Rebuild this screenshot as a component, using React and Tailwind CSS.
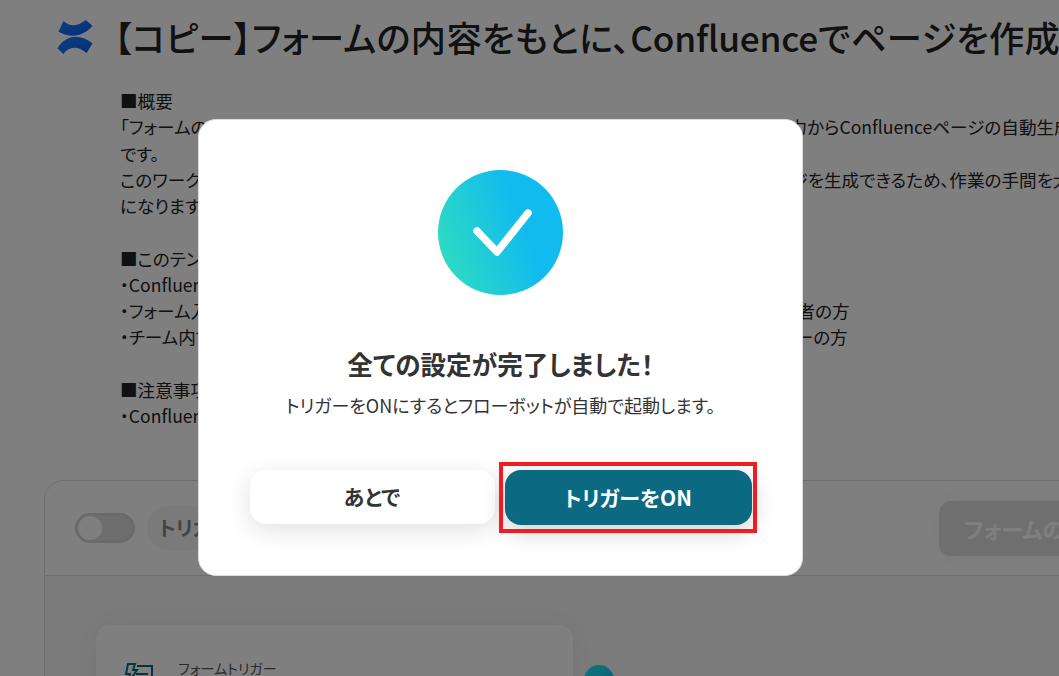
const bodyLines = [
  '■概要',
  '「フォームの内容をもとに、Confluenceでページを作成する」ワークフローは、フォームの入力からConfluenceページの自動生成を実現する業務効率化フロー',
  'です。',
  'このワークフローを活用すると、フォームからの送信内容をもとに、自動でConfluenceページを生成できるため、作業の手間を大幅に削減できるよう',
  'になります。',
  '',
  '■このテンプレートをおすすめする方',
  '・Confluenceを日常的に活用してドキュメントを管理しているチームの方',
  '・フォーム入力の内容をもとにしたページ作成を毎回手作業で行っていて負担に感じる担当者の方',
  '・チーム内での情報共有やナレッジ管理を、よりスムーズに進めたいと考えているマネージャーの方',
  '',
  '■注意事項',
  '・Confluenceとのアカウント連携が必要です。',
];

function ConfluenceLogo() {
  return (
    <svg width="38" height="35" viewBox="0 0 38 36" className="mt-[1px] shrink-0">
      <defs>
        <linearGradient id="conf" x1="0" y1="0" x2="1" y2="1">
          <stop offset="0" stopColor="#1a7eff" />
          <stop offset="1" stopColor="#0c5ff0" />
        </linearGradient>
      </defs>
      <path d="M6 1 C13 7 20 7 29 0 L36 6 C27 17 14 19 1 12 Z" fill="url(#conf)" />
      <path d="M0 29 L6 35 C12 27 20 26 30 34 L36 24 C22 13 8 16 0 29 Z" fill="url(#conf)" />
    </svg>
  );
}

export default function App() {
  return (
    <div className="relative h-[676px] w-[1059px] overflow-hidden bg-white font-['Noto_Sans_CJK_JP',sans-serif] text-[#222] [font-feature-settings:'palt']">
      {/* Page behind the dialog */}
      <div className="w-[1300px]">
        <div className="flex items-start gap-[19px] pl-[57px] pt-[19px]">
          <ConfluenceLogo />
          <h1 className="whitespace-nowrap text-[35.2px] font-medium leading-[36px] tracking-[0.35px]">
            【コピー】フォームの内容をもとに、<span className="tracking-[-0.2px]">Confluence</span>でページを作成する
          </h1>
        </div>

        <div className="mt-[33px] pl-[120px] text-[17.6px] leading-[26.25px]">
          {bodyLines.map((line, i) => (
            <p key={i} className="min-h-[26.25px] whitespace-nowrap">{line}</p>
          ))}
        </div>

        <div className="ml-[44px] mt-[51px] h-[400px] overflow-hidden rounded-tl-[20px] border border-[#d8d8d8]">
          <div className="flex h-[95px] items-center border-b border-[#d8d8d8] bg-white pl-[30px]">
            <div className="flex h-[30px] w-[60px] items-center rounded-full border-[3px] border-[#d4d4d4] bg-[#dcdcdc]">
              <div className="h-[24px] w-[24px] rounded-full bg-white" />
            </div>
            <div className="ml-[12px] w-[160px] rounded-full bg-[#f5f5f5] px-[12px] py-[8px] text-xl font-bold text-[#888]">
              トリガーをOFF
            </div>
            <div className="ml-[632px] flex h-[55px] items-center rounded-[12px] bg-[#dedede] px-[25px] text-[22px] font-bold text-white shadow-[0_0_24px_rgba(0,0,0,0.05)]">
              フォームの内容を確認
            </div>
          </div>
          <div className="flex h-full items-start bg-[#f7f7f7] pl-[51px] pt-[49px]">
            <div className="flex w-[477px] items-start gap-[24px] rounded-[14px] bg-white px-[28px] pt-[35px] pb-[40px] shadow-[0_0_30px_rgba(0,0,0,0.06)]">
              <svg width="30" height="30" viewBox="0 0 30 30" fill="none" stroke="#0b6982" strokeWidth="2" className="mt-[2px]">
                <path d="M4 2h7l-2 6h4l-9 13 2-9H2zM13 4h15v22H10M12 12h12" />
              </svg>
              <div className="text-sm leading-[16px] text-[#555]">
                <div>フォームトリガー</div>
                <div className="mt-[4px] text-lg font-bold text-[#222]">フォーム</div>
              </div>
            </div>
            <div className="ml-[11px] mt-[40px] h-[30px] w-[30px] rounded-full bg-[linear-gradient(135deg,#1ce8f8,#16c4e8)]" />
          </div>
        </div>
      </div>

      {/* Overlay and dialog */}
      <div className="absolute inset-0 bg-black/50 pl-[198px] pt-[119px]">
        <div className="flex h-[457px] w-[605px] flex-col items-center rounded-[18px] border border-[#ddd] bg-white pt-[50px]">
          <div className="flex h-[125px] w-[125px] items-center justify-center rounded-full bg-[linear-gradient(70deg,#2fdcc0_8%,#11bbef_65%)]">
            <svg width="125" height="125" viewBox="0 0 125 125" fill="none" stroke="#fff" strokeWidth="7.5" strokeLinecap="round" strokeLinejoin="round">
              <path d="M39 61 59 82 90 43" />
            </svg>
          </div>
          <h2 className="mt-[51px] text-[25.6px] font-bold leading-[36px] text-[#333]">全ての設定が完了しました！</h2>
          <p className="mt-[11px] text-[18px] leading-[24px] text-[#333]">トリガーをONにするとフローボットが自動で起動します。</p>
          <div className="mt-[53px] flex items-start gap-[10px]">
            <button className="h-[54px] w-[245px] rounded-[16px] bg-white text-[21px] font-bold text-[#333] shadow-[0_6px_24px_rgba(0,0,0,0.12)]">
              あとで
            </button>
            <div className="relative">
              <button className="block h-[55px] w-[247px] rounded-[16px] bg-[#0b6982] text-[21px] font-bold text-white shadow-[0_6px_24px_rgba(0,0,0,0.2)]">
                トリガーをON
              </button>
              {/* Red highlight around the button */}
              <div className="absolute -bottom-[8px] -left-[6px] -right-[5px] -top-[8px] border-[4px] border-[#ee1c25]" />
            </div>
          </div>
        </div>
      </div>
    </div>
  );
}
